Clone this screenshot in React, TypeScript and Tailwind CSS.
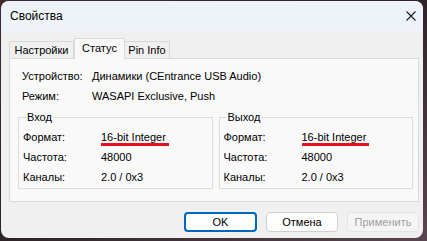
import React from "react";

const font = { fontFamily: '"Liberation Sans", Arial, sans-serif' };

function Row({ label, value, valueX }: { label: string; value: React.ReactNode; valueX: string }) {
  return (
    <div className="flex h-[20px] items-center leading-[14px]">
      <span className={valueX}>{label}</span>
      <span>{value}</span>
    </div>
  );
}

function Marked({ children }: { children: React.ReactNode }) {
  return (
    <span className="relative inline-block">
      {children}
      <span className="absolute left-0 -right-[3px] top-[13px] h-[3px] bg-[#e3141b]" />
    </span>
  );
}

function Group({ title }: { title: string }) {
  return (
    <fieldset className="flex-1 border border-[#dcdcdc] px-[4px] pt-[3px] pb-[1px]">
      <legend className="ml-[3px] px-[1px] leading-[14px]">{title}</legend>
      <Row label="Формат:" value={<Marked>16-bit Integer</Marked>} valueX="w-[78px]" />
      <Row label="Частота:" value="48000" valueX="w-[78px]" />
      <Row label="Каналы:" value="2.0 / 0x3" valueX="w-[78px]" />
    </fieldset>
  );
}

export default function App() {
  return (
    <div className="h-[241px] w-[427px] bg-gradient-to-br from-[#3a2a30] via-[#2e2428] to-[#5a4650] pl-[1px] pt-[1px]" style={font}>
      <div className="flex h-[237px] w-[422px] flex-col overflow-hidden rounded-[8px] bg-[#f0f0f0] text-[11px] text-black">
        {/* Заголовок */}
        <div className="flex h-[30px] items-center justify-between bg-[#eef3f9] pl-[9px] pr-[8px]">
          <span className="text-[12px]">Свойства</span>
          <svg width="10" height="10" viewBox="0 0 10 10" className="mr-[-1px]">
            <path d="M0.5 0.5 L9.5 9.5 M9.5 0.5 L0.5 9.5" stroke="#1a1a1a" strokeWidth="1.1" />
          </svg>
        </div>

        <div className="flex flex-1 flex-col pl-[8px] pt-[7px]">
          {/* Вкладки */}
          <div className="flex h-[20px] items-end">
            <div className="flex h-[17px] w-[65px] items-center justify-center border border-b-0 border-[#d9d9d9] bg-[#f0f0f0] pt-[1px]">
              Настройки
            </div>
            <div className="relative z-10 -mb-px flex h-[21px] w-[51px] items-center justify-center border border-b-0 border-[#d9d9d9] bg-[#f9f9f9] pb-[2px]">
              Статус
            </div>
            <div className="flex h-[17px] w-[45px] items-center justify-center border border-b-0 border-l-0 border-[#d9d9d9] bg-[#f0f0f0] pt-[1px]">
              Pin Info
            </div>
          </div>

          {/* Панель */}
          <div className="flex h-[144px] w-[410px] flex-col border border-[#d9d9d9] bg-[#f9f9f9] pl-[12px] pr-[5px] pt-[7px]">
            <Row label="Устройство:" value="Динамики (CEntrance USB Audio)" valueX="w-[70px]" />
            <Row label="Режим:" value="WASAPI Exclusive, Push" valueX="w-[70px]" />
            <div className="-ml-[4px] mt-[4px] flex gap-[6px]">
              <Group title="Вход" />
              <Group title="Выход" />
            </div>
          </div>

          {/* Кнопки */}
          <div className="mt-[10px] flex justify-end gap-[9px] pr-[4px]">
            <button className="h-[20px] w-[73px] rounded-[4px] border-2 border-[#0067c0] bg-[#fdfdfd]">OK</button>
            <button className="h-[20px] w-[72px] rounded-[4px] border border-[#d0d0d0] bg-[#fdfdfd]">Отмена</button>
            <button className="h-[20px] w-[72px] rounded-[4px] border border-[#e5e5e5] bg-[#f5f5f5] text-[#a0a0a0]">Применить</button>
          </div>
        </div>
      </div>
    </div>
  );
}
